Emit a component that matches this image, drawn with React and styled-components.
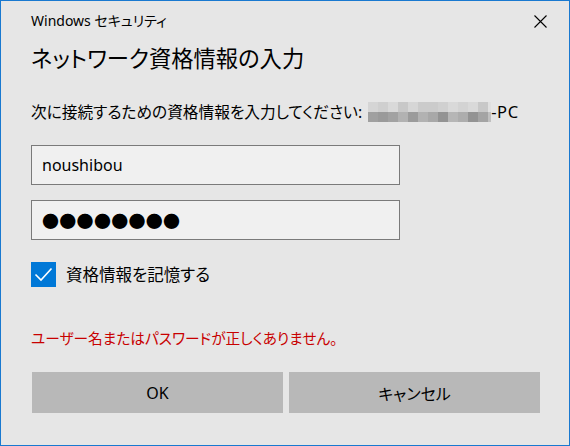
import styled, { createGlobalStyle } from "styled-components";

const GlobalStyle = createGlobalStyle`
  html, body {
    margin: 0;
    padding: 0;
    background: #e6e6e6;
  }
  body {
    font-family: "Noto Sans", "Noto Sans CJK JP", sans-serif;
    font-feature-settings: "palt";
    color: #000;
  }
`;

const Dialog = styled.div`
  box-sizing: border-box;
  width: 570px;
  height: 446px;
  border: 1px solid #1979d0;
  background: #e6e6e6;
  padding: 0 30px;
  display: flex;
  flex-direction: column;
`;

const TitleBar = styled.div`
  display: flex;
  align-items: center;
  justify-content: space-between;
  margin-top: 9px;
  height: 22px;
  font-size: 14px;
  line-height: 22px;
  margin-right: -8px;
`;

const CloseButton = styled.button`
  border: none;
  background: none;
  padding: 0;
  width: 14px;
  height: 14px;
  display: flex;
  align-items: center;
  justify-content: center;
`;

const Heading = styled.h1`
  margin: 11px 0 0;
  font-size: 22.3px;
  font-weight: 400;
  line-height: 32px;
`;

const Prompt = styled.p`
  margin: 26px 0 0;
  font-size: 15.7px;
  line-height: 22px;
  display: flex;
  align-items: center;
`;

const Redacted = styled.span`
  display: inline-grid;
  grid-template-columns: repeat(12, 10px) 3px;
  grid-template-rows: 10px 10px;
  margin-left: 6px;
`;

const Cell = styled.span`
  background: ${(p) => p.$c};
`;

const Suffix = styled.span`
  font-size: 16.5px;
  letter-spacing: 0.6px;
`;

const Field = styled.div`
  box-sizing: border-box;
  width: 369px;
  height: 40px;
  margin-top: ${(p) => p.$top}px;
  border: 1px solid #7a7a7a;
  background: #f0f0f0;
  padding: 0 10px;
  display: flex;
  align-items: center;
  font-size: 16px;
`;

const Dots = styled.span`
  font-family: "Noto Sans CJK JP", sans-serif;
  font-size: 17px;
  letter-spacing: 0.3px;
`;

const CheckRow = styled.label`
  display: flex;
  align-items: center;
  gap: 10px;
  margin-top: 22px;
  font-size: 16.5px;
  line-height: 25px;
`;

const Box = styled.span`
  width: 25px;
  height: 25px;
  background: #0078d7;
  display: flex;
  align-items: center;
  justify-content: center;
`;

const ErrorText = styled.p`
  margin: 40px 0 0;
  font-size: 14.7px;
  line-height: 22px;
  color: #c80000;
`;

const Buttons = styled.div`
  display: grid;
  grid-template-columns: 1fr 1fr;
  gap: 6px;
  margin-top: 23px;
  margin-left: 1px;
  width: 508px;
`;

const Button = styled.button`
  height: 41px;
  border: none;
  background: #b8b8b8;
  font-family: "Noto Sans", "Noto Sans CJK JP", sans-serif;
  font-feature-settings: "palt";
  font-size: 16px;
  color: #000;
  padding: 0;
`;

const topRow = ["#d5d5d5", "#cfcfcf", "#d9d9d9", "#c8c8c8", "#d6d6d6", "#cbcbcb", "#cbcbcb", "#d0d0d0", "#d9d9d9", "#d3d3d3", "#d9d9d9", "#c8c8c8", "#e0e0e0"];
const bottomRow = ["#a0a0a0", "#9a9a9a", "#a2a2a2", "#b2b2b2", "#9b9b9b", "#b2b2b2", "#a8a8a8", "#939393", "#b6b6b6", "#adadad", "#939393", "#a4a4a4", "#c0c0c0"];

const App = () => {
  return (
    <>
      <GlobalStyle />
      <Dialog>
        <TitleBar>
          <span>Windows セキュリティ</span>
          <CloseButton>
            <svg width="13" height="13" viewBox="0 0 13 13">
              <path d="M0.5 0.5 L12.5 12.5 M12.5 0.5 L0.5 12.5" stroke="#000" strokeWidth="1.1" fill="none" />
            </svg>
          </CloseButton>
        </TitleBar>
        <Heading>ネットワーク資格情報の入力</Heading>
        <Prompt>
          次に接続するための資格情報を入力してください:
          <Redacted>
            {topRow.map((c, i) => <Cell key={"t" + i} $c={c} />)}
            {bottomRow.map((c, i) => <Cell key={"b" + i} $c={c} />)}
          </Redacted>
          <Suffix>-PC</Suffix>
        </Prompt>
        <Field $top={22}>noushibou</Field>
        <Field $top={15}>
          <Dots>●●●●●●●●</Dots>
        </Field>
        <CheckRow>
          <Box>
            <svg width="25" height="25" viewBox="0 0 25 25">
              <path d="M4.5 12.5 L10 18 L20.5 6.5" stroke="#fff" strokeWidth="1.6" fill="none" />
            </svg>
          </Box>
          資格情報を記憶する
        </CheckRow>
        <ErrorText>ユーザー名またはパスワードが正しくありません。</ErrorText>
        <Buttons>
          <Button>OK</Button>
          <Button>キャンセル</Button>
        </Buttons>
      </Dialog>
    </>
  );
};

export default App;
